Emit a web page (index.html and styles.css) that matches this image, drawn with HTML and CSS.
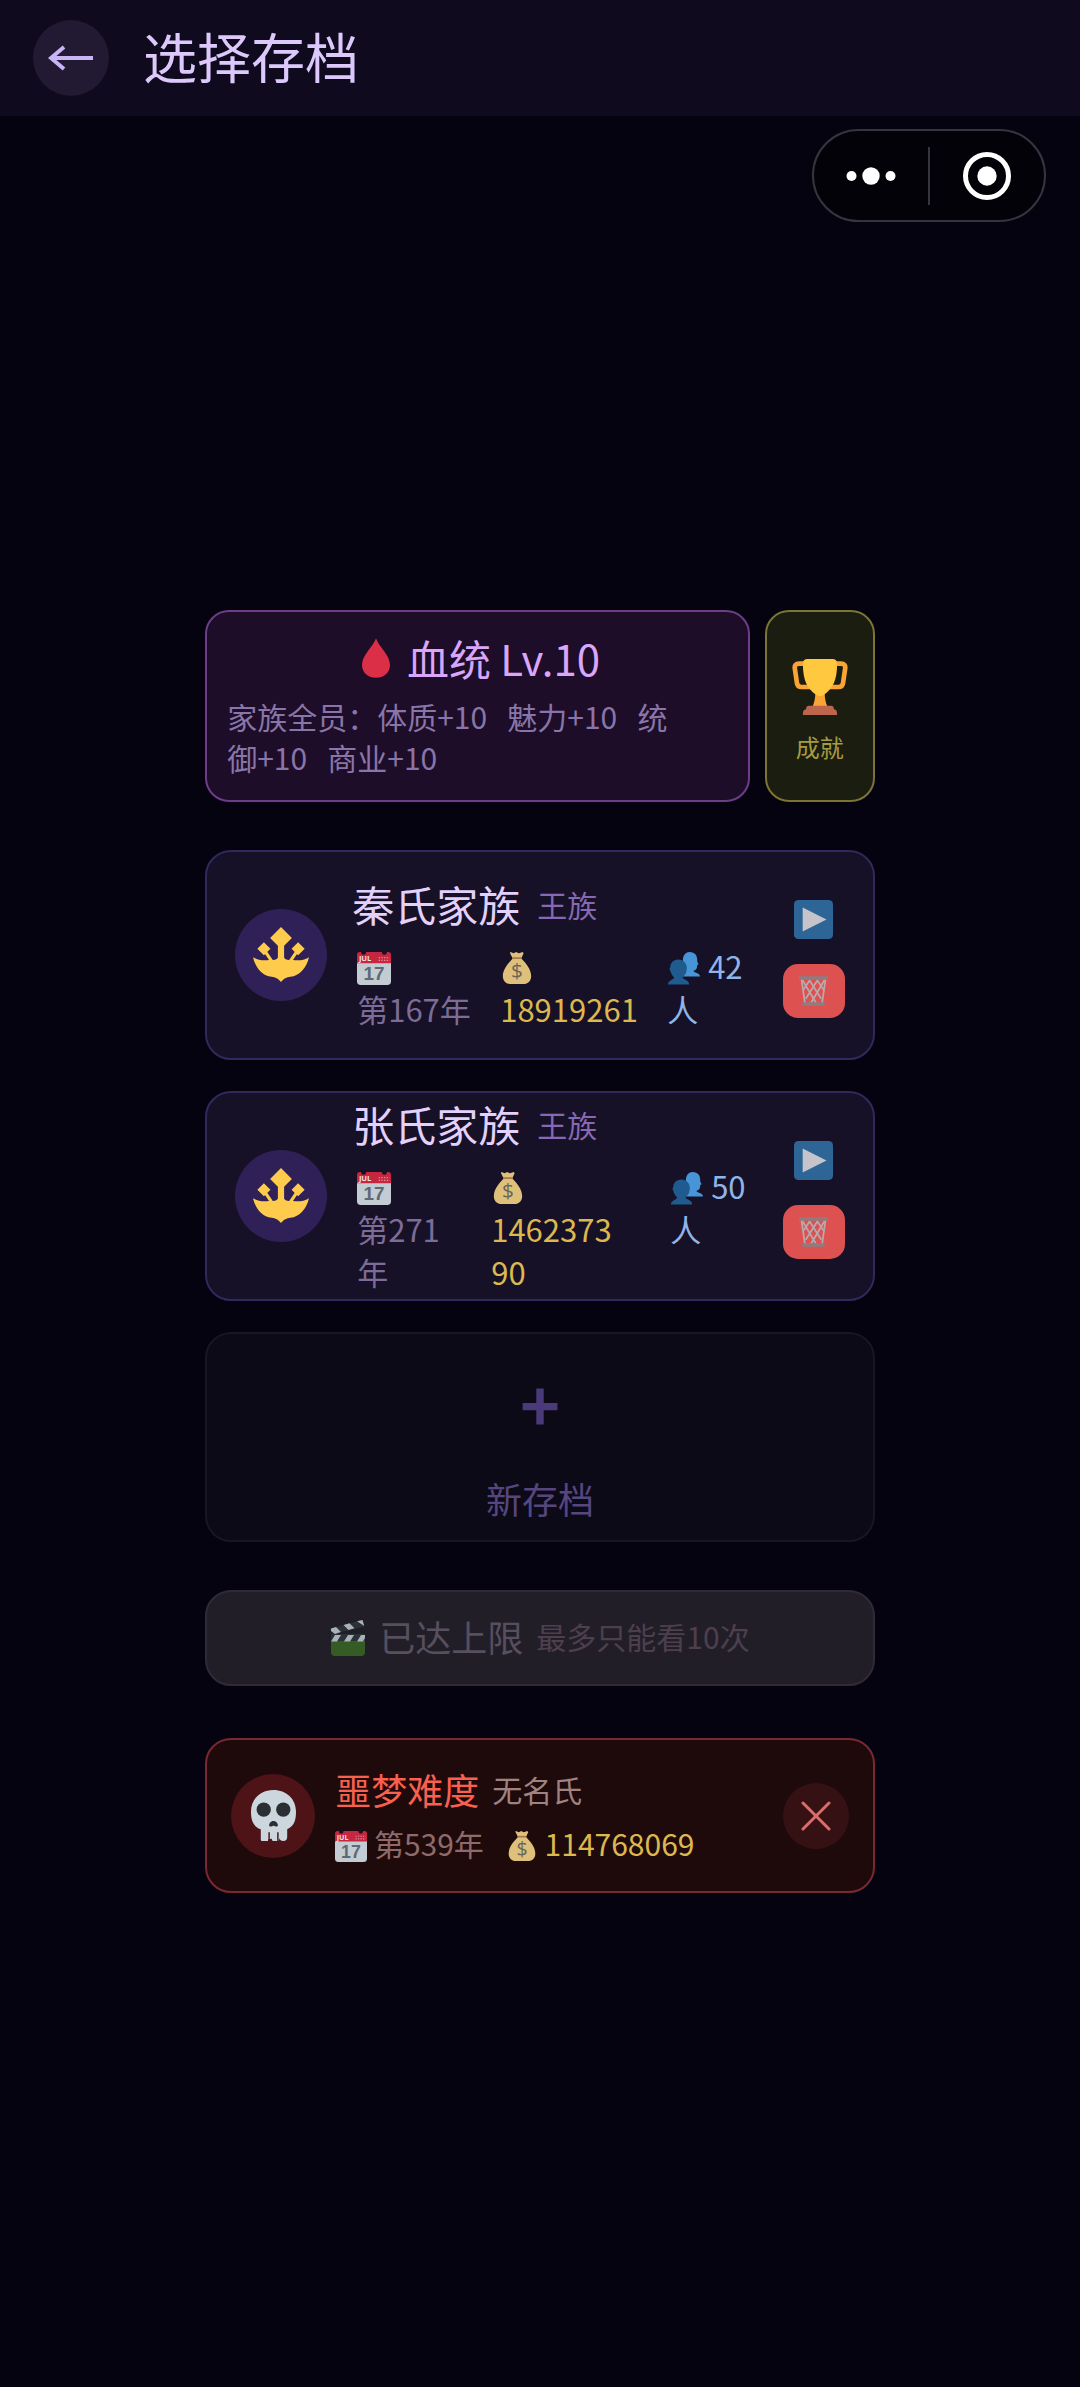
FILE: index.html
```html
<!DOCTYPE html>
<html lang="zh-CN">
<head>
    <meta charset="UTF-8">
    <meta name="viewport" content="width=device-width, initial-scale=1.0">
    <title>选择存档</title>
    <link rel="stylesheet" href="styles.css">
</head>
<body>
    <!-- shared icons -->
    <svg class="sprite" aria-hidden="true">
        <symbol id="calendar" viewBox="0 0 36 36">
            <path fill="#c3ccd3" d="M0 10h36v22a4 4 0 0 1-4 4H4a4 4 0 0 1-4-4z"/>
            <path fill="#c4273f" d="M0 13V4a3 3 0 0 1 3-3h30a3 3 0 0 1 3 3v9z"/>
            <circle cx="7" cy="1.500" r="2.600" fill="#1a1020"/>
            <circle cx="29" cy="1.500" r="2.600" fill="#1a1020"/>
            <path stroke="#e58c99" stroke-width="1.300" stroke-dasharray="1.400 1.400" d="M23 7h11.500M23 10h11.500"/>
        </symbol>
        <symbol id="money" viewBox="0 0 36 36">
            <path fill="#dfc07b" d="M11 1l3.500 1.500L17 1l3 1.500L24 1l1 1.500L22.500 8c4 4 10.500 11 10.500 18.500C33 32 29.500 35 25 35H11c-4.500 0-8-3-8-8.500C3 19 9.500 12 13.500 8L10.500 2z"/>
            <path stroke="#a7754e" stroke-width="1.800" d="M13 7.500h10"/>
        </symbol>
        <symbol id="people" viewBox="0 0 36 36">
            <path fill="#4795d6" d="M24 1c5.500 0 8 4 8 8v2l1.500 3-1.500.8c0 4-1.500 5.700-4 6.200 0 2.500 7 2 7 6H17V12c-1-6 2-11 7-11z"/>
            <path fill="#205b8f" d="M12 9c5.500 0 9 4 9 9s-2 8-4.500 9.500c0 3 7 2.500 7 8H1c0-5 6.500-5 6.500-7.500C5.500 26.500 4 23 3.500 21L2.500 19 3.500 17c0-4 3-8 8.500-8z"/>
        </symbol>
        <symbol id="crest" viewBox="0 0 36 36">
            <path fill="#ffcb4c" d="M18 0l7 7-5 5v10h-4V12l-5-5z"/>
            <path fill="#ffcb4c" d="M7 9.800l4.200 4.200L7 18.200 2.800 14zM29 9.800l4.200 4.200-4.200 4.200-4.200-4.200z"/>
            <path fill="none" stroke="#ffcb4c" stroke-width="2" d="M8 16l4 6M28 16l-4 6"/>
            <path fill="#ffcb4c" d="M0 19.400c3.500 2 7 2.500 11 1.600 2.500.5 4.500.2 5.500-2h3c1 2.200 3 2.500 5.500 2 4 .9 7.500.4 11-1.600-1.500 6.500-6 12-12 12.600-2.500.3-4 1-6 3.400-2-2.400-3.500-3.100-6-3.400-6-.6-10.500-6.100-12-12.600z"/>
        </symbol>
        <symbol id="play" viewBox="0 0 36 36">
            <rect width="36" height="36" rx="4" fill="#2e6597"/>
            <path fill="#c5c4cb" d="M8 7l22 11L8 29z"/>
        </symbol>
        <symbol id="bin" viewBox="0 0 36 36">
            <g fill="none" stroke="#b9a9ad" stroke-width="2">
                <path d="M4 4l4 28M32 4l-4 28"/>
                <path d="M5 5l16 27M13 5l14 22M22 5l8 12M31 5L15 32M23 5L9 27M14 5L6 17"/>
            </g>
            <rect x="1" y="1" width="34" height="4" rx="1" fill="#8f7c80"/>
            <rect x="5" y="31" width="26" height="4" rx="1" fill="#8f7c80"/>
        </symbol>
    </svg>

    <header class="topbar">
        <button class="back" type="button" aria-label="返回">
            <svg viewBox="0 0 46 26" fill="none" stroke="#c8b4f6" stroke-width="4"><path d="M45 13H3M16 2L3 13l13 11"/></svg>
        </button>
        <h1>选择存档</h1>
        <div class="capsule">
            <button type="button" aria-label="更多">
                <svg viewBox="0 0 50 50" fill="#fff"><circle cx="5.500" cy="25" r="5"/><circle cx="25" cy="25" r="8.700"/><circle cx="44.500" cy="25" r="5"/></svg>
            </button>
            <button type="button" aria-label="关闭">
                <svg viewBox="0 0 50 50"><circle cx="25" cy="25" r="21.500" fill="none" stroke="#fff" stroke-width="5"/><circle cx="25" cy="25" r="9.700" fill="#fff"/></svg>
            </button>
        </div>
    </header>

    <main>
        <div class="top-row">
            <section class="blood">
                <h2>
                    <svg viewBox="0 0 36 36"><path fill="#da2f47" d="M18 1c2 7 12 14 12 23 0 6.500-5.300 11-12 11S6 30.500 6 24C6 15 16 8 18 1z"/></svg>
                    血统 Lv.10
                </h2>
                <p>家族全员：体质+10&nbsp;&nbsp; 魅力+10&nbsp;&nbsp; 统<br>御+10&nbsp;&nbsp; 商业+10</p>
            </section>
            <button class="achieve" type="button">
                <svg viewBox="0 0 36 36">
                    <path fill="none" stroke="#f9a435" stroke-width="3" d="M9 3H4.500C2.500 3 1.500 4 1.800 6l1.400 9.500c.3 2 1.300 2.500 3 2.500H12M27 3h4.500c2 0 3 1 2.700 3l-1.400 9.500c-.3 2-1.300 2.500-3 2.500H24"/>
                    <path fill="#f9a435" d="M15 21h6c0 4 .5 7 2 10H13c1.500-3 2-6 2-10z"/>
                    <path fill="#ffc83f" d="M10 0h16c2 0 3 1 3 3 0 11-3 16-8.500 20-1.500 1.200-3.500 1.200-5 0C10 19 7 14 7 3c0-2 1-3 3-3z"/>
                    <path fill="#bd654d" d="M11 30h14c1.500 0 2 .8 2 2.500 1.500 0 2 .8 2 3.500H7c0-2.700.5-3.500 2-3.500 0-1.700.5-2.500 2-2.500z"/>
                </svg>
                成就
            </button>
        </div>

        <div class="saves">
            <article class="card save">
                <div class="avatar"><svg><use href="#crest"/></svg></div>
                <div class="info">
                    <h3>秦氏家族 <small>王族</small></h3>
                    <div class="stats">
                        <span><svg class="emoji" viewBox="0 0 36 36"><use href="#calendar"/><text x="2" y="11">JUL</text><text class="day" x="18" y="31">17</text></svg><br>第167年</span>
                        <span class="gold"><svg class="emoji" viewBox="0 0 36 36"><use href="#money"/><text class="dollar" x="18" y="29">$</text></svg><br>18919261</span>
                        <span class="folk"><svg class="emoji"><use href="#people"/></svg> 42<br>人</span>
                    </div>
                </div>
                <div class="actions">
                    <button type="button" class="play" aria-label="继续"><svg><use href="#play"/></svg></button>
                    <button type="button" class="delete" aria-label="删除"><svg><use href="#bin"/></svg></button>
                </div>
            </article>

            <article class="card save">
                <div class="avatar"><svg><use href="#crest"/></svg></div>
                <div class="info">
                    <h3>张氏家族 <small>王族</small></h3>
                    <div class="stats stats-long">
                        <span><svg class="emoji" viewBox="0 0 36 36"><use href="#calendar"/><text x="2" y="11">JUL</text><text class="day" x="18" y="31">17</text></svg><br>第271<br>年</span>
                        <span class="gold"><svg class="emoji" viewBox="0 0 36 36"><use href="#money"/><text class="dollar" x="18" y="29">$</text></svg><br>1462373<br>90</span>
                        <span class="folk"><svg class="emoji"><use href="#people"/></svg> 50<br>人</span>
                    </div>
                </div>
                <div class="actions">
                    <button type="button" class="play" aria-label="继续"><svg><use href="#play"/></svg></button>
                    <button type="button" class="delete" aria-label="删除"><svg><use href="#bin"/></svg></button>
                </div>
            </article>

            <button class="card new-save" type="button">
                <span class="plus">+</span>
                <span>新存档</span>
            </button>
        </div>

        <button class="card ad" type="button">
            <svg viewBox="0 0 36 36">
                <path fill="#355c24" d="M1 20h34v12a4 4 0 0 1-4 4H5a4 4 0 0 1-4-4z"/>
                <path fill="#2b3236" d="M1 14h34v7H1zM0 9L32 0l2 6.500L2.500 14z"/>
                <path fill="#a9b2b8" d="M5 15h6l-4 6.500H1zM18 15h6l-4 6.500h-6zM31 15h4v3l-2 3.500h-6zM1 8.600l5-1.500 5 5-6 1.800-4-3zM13.500 5l6-1.700 5 5-6 1.700zM27 1.200L32.500 0l1.800 6z"/>
            </svg>
            <span>已达上限</span>
            <small>最多只能看10次</small>
        </button>

        <article class="card nightmare">
            <div class="skull">
                <svg viewBox="0 0 46 52">
                    <path fill="#ccd6dd" d="M23 0c13 0 23 9 23 22 0 7-1 15-9 18v8a4 4 0 0 1-8 0 4 4 0 0 1-8 1.500A4 4 0 0 1 18 50a4 4 0 0 1-8-1v-9C1 37 0 29 0 22 0 9 10 0 23 0z"/>
                    <path stroke="#4d1316" stroke-width="1.500" d="M18.500 43v9M27.500 43v9"/>
                    <circle cx="13" cy="20" r="7.300" fill="#292f33"/>
                    <circle cx="33" cy="20" r="7.300" fill="#292f33"/>
                    <path fill="#292f33" d="M23 31.500c3 0 4.500 2.500 4.500 4.500s-3 1.500-4.500.3C21.500 37.500 18.500 38 18.500 36s1.500-4.500 4.500-4.500z"/>
                </svg>
            </div>
            <div class="info">
                <h3>噩梦难度 <small>无名氏</small></h3>
                <div class="line">
                    <span><svg class="emoji" viewBox="0 0 36 36"><use href="#calendar"/><text x="2" y="11">JUL</text><text class="day" x="18" y="31">17</text></svg> 第539年</span>
                    <span class="gold"><svg class="emoji" viewBox="0 0 36 36"><use href="#money"/><text class="dollar" x="18" y="29">$</text></svg> 114768069</span>
                </div>
            </div>
            <button class="close" type="button" aria-label="放弃">
                <svg viewBox="0 0 30 30" fill="none" stroke="#dc6c6c" stroke-width="3" stroke-linecap="round"><path d="M2 2l26 26M28 2L2 28"/></svg>
            </button>
        </article>
    </main>
</body>
</html>
```
FILE: styles.css
```css
* {
    box-sizing: border-box;
}
body {
    margin: 0;
    min-height: 100vh;
    display: flex;
    flex-direction: column;
    background: #050310;
    color: #e3d0fc;
    font-family: "Noto Sans CJK SC", "Noto Sans", sans-serif;
    font-weight: 400;
}
h1, h2, h3, p {
    margin: 0;
    font-weight: inherit;
}
button {
    padding: 0;
    border: none;
    background: none;
    color: inherit;
    font: inherit;
    cursor: pointer;
}
svg {
    display: block;
}
.sprite {
    position: absolute;
    width: 0;
    height: 0;
}

/* header */
.topbar {
    position: relative;
    display: flex;
    align-items: center;
    gap: 34px;
    height: 116px;
    padding: 0 33px;
    background: #0f0a1d;
}
.back {
    display: flex;
    align-items: center;
    justify-content: center;
    width: 76px;
    height: 76px;
    border-radius: 50%;
    background: #221932;
}
.back svg {
    width: 46px;
    height: 26px;
}
.topbar h1 {
    padding-bottom: 4px;
    font-size: 54px;
    line-height: 76px;
    color: #dcc8fb;
}
.capsule {
    position: absolute;
    top: 129px;
    right: 34px;
    display: flex;
    align-items: center;
    width: 234px;
    height: 93px;
    border: 2px solid #36343d;
    border-radius: 47px;
    background: #030208;
}
.capsule button {
    flex: 1;
    display: flex;
    justify-content: center;
    align-items: center;
    height: 58px;
}
.capsule button + button {
    border-left: 2px solid #36343d;
}
.capsule svg {
    width: 50px;
    height: 50px;
}

/* content */
main {
    flex: 1;
    display: flex;
    flex-direction: column;
    justify-content: center;
    width: 62%;
    margin: 0 auto;
}
.top-row {
    display: flex;
    gap: 15px;
    margin-bottom: 48px;
}
.blood {
    flex: 1;
    padding: 16px 20px 22px;
    border: 2px solid #6d3d88;
    border-radius: 24px;
    background: #1d0d28;
}
.blood h2 {
    display: flex;
    align-items: center;
    justify-content: center;
    gap: 10px;
    font-size: 42px;
    line-height: 60px;
    color: #d9a6fb;
    margin-bottom: 8px;
}
.blood h2 svg {
    width: 42px;
    height: 42px;
}
.blood p {
    font-size: 30px;
    line-height: 41px;
    color: #8975a9;
}
.achieve {
    display: flex;
    flex-direction: column;
    align-items: center;
    justify-content: center;
    gap: 14px;
    width: 110px;
    padding-top: 10px;
    border: 2px solid #7b7434;
    border-radius: 24px;
    background: #1b1d10;
    color: #a69b43;
    font-size: 24px;
}
.achieve svg {
    width: 56px;
    height: 56px;
}

.saves {
    display: flex;
    flex-direction: column;
    gap: 31px;
    margin-bottom: 48px;
}
.card {
    display: flex;
    align-items: center;
    border: 2px solid #32285c;
    border-radius: 26px;
    background: #161126;
}
.save {
    height: 210px;
    padding: 0 28px;
}
.avatar {
    display: flex;
    align-items: center;
    justify-content: center;
    width: 92px;
    height: 92px;
    border-radius: 50%;
    background: #2f2158;
}
.avatar svg {
    width: 56px;
    height: 56px;
}
.info {
    flex: 1;
    min-width: 0;
}
.save .info {
    margin-left: 25px;
    padding-bottom: 4px;
}
.save h3 {
    display: flex;
    align-items: center;
    gap: 17px;
    font-size: 42px;
    line-height: 56px;
    margin-bottom: 12px;
}
h3 small {
    font-size: 30px;
}
.save small {
    color: #8768b3;
}
.stats {
    display: grid;
    grid-template-columns: 143px 167px 1fr;
    padding-left: 5px;
    font-size: 31px;
    line-height: 43px;
    color: #7d6c98;
}
.stats-long {
    grid-template-columns: 134px 179px 1fr;
}
.emoji {
    display: inline-block;
    width: 34px;
    height: 34px;
    vertical-align: -6px;
}
.emoji text {
    font: 700 8px "Open Sans", sans-serif;
    fill: #f3dfe3;
}
.emoji .day {
    font: 700 20px "Liberation Sans", sans-serif;
    text-anchor: middle;
    fill: #5d6a73;
}
.emoji .dollar {
    font: 400 22px "Open Sans", sans-serif;
    text-anchor: middle;
    fill: #67665a;
}
.gold {
    color: #dcb84e;
}
.folk {
    color: #8fb4e8;
}
.actions {
    display: flex;
    flex-direction: column;
    gap: 18px;
}
.actions button {
    display: flex;
    align-items: center;
    justify-content: center;
    width: 62px;
    height: 54px;
    border-radius: 15px;
}
.play svg {
    width: 39px;
    height: 39px;
}
.actions .delete {
    background: #de5151;
}
.delete svg {
    width: 31px;
    height: 32px;
}

.new-save {
    flex-direction: column;
    justify-content: center;
    gap: 36px;
    height: 210px;
    padding-top: 18px;
    border-color: #191526;
    background: #0d0a17;
    color: #56467f;
    font-size: 36px;
    line-height: 50px;
}
.plus {
    font-size: 68px;
    line-height: 68px;
    font-weight: 700;
    color: #4b3a7a;
}

.ad {
    justify-content: center;
    gap: 13px;
    height: 96px;
    margin-bottom: 52px;
    border-color: #302a38;
    background: #221e28;
    color: #574e5e;
    font-size: 36px;
}
.ad svg {
    width: 36px;
    height: 36px;
}
.ad span, .ad small {
    padding-bottom: 4px;
}
.ad small {
    font-size: 30px;
    color: #4e3f4f;
}

.nightmare {
    height: 155px;
    padding: 0 24px;
    border-color: #7a2832;
    background: #1f0a0b;
}
.skull {
    display: flex;
    align-items: center;
    justify-content: center;
    width: 84px;
    height: 84px;
    border-radius: 50%;
    background: #4d1316;
}
.skull svg {
    width: 45px;
    height: 51px;
}
.nightmare .info {
    margin-left: 20px;
}
.nightmare h3 {
    display: flex;
    align-items: center;
    gap: 13px;
    font-size: 36px;
    line-height: 54px;
    color: #f8604f;
}
.nightmare small {
    color: #9e8381;
}
.line {
    display: flex;
    gap: 22px;
    font-size: 30px;
    line-height: 54px;
    color: #906a69;
}
.line .emoji {
    width: 32px;
    height: 32px;
}
.close {
    display: flex;
    align-items: center;
    justify-content: center;
    width: 66px;
    height: 66px;
    border-radius: 50%;
    background: #351113;
}
.close svg {
    width: 30px;
    height: 30px;
}
```
